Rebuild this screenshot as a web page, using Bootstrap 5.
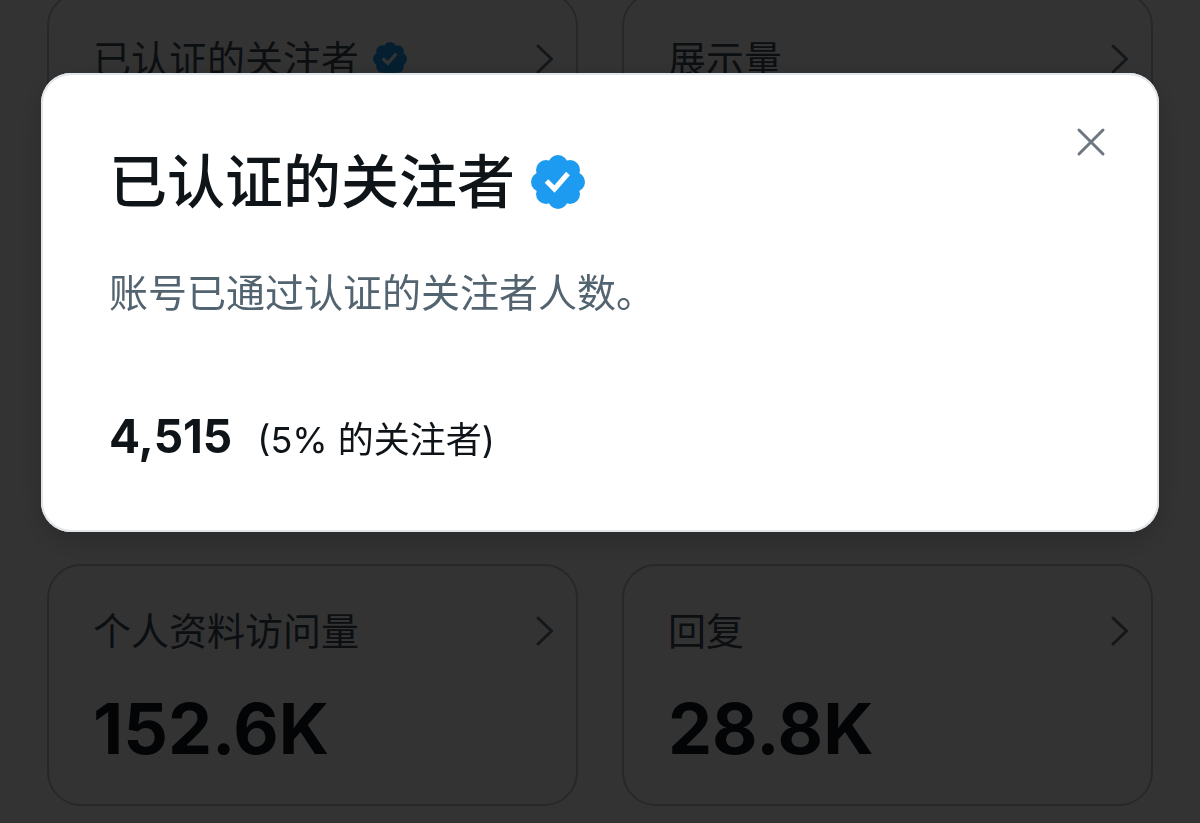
<!DOCTYPE html>
<html lang="zh-CN">
<head>
<meta charset="utf-8">
<meta name="viewport" content="width=device-width, initial-scale=1">
<title>已认证的关注者</title>
<link href="https://cdn.jsdelivr.net/npm/bootstrap@5.3.0/dist/css/bootstrap.min.css" rel="stylesheet">
<style>
  body { font-family: Inter, "Noto Sans CJK SC", sans-serif; color: #0f1419; overflow: hidden; }
  /* the metrics page is scrolled so the first row starts just above the window */
  .metrics { padding: 0 47px; margin-top: -8px; overflow: hidden; }
  .metrics-grid { --bs-gutter-x: 44px; --bs-gutter-y: 44px; }
  .metric { height: 242px; padding: 45px 22px 0 44px; border: 2px solid #bac4ca; border-radius: 34px; }
  .metric-title { font-size: 38px; line-height: 40px; color: #3f4b55; }
  .metric-value { font-size: 70px; line-height: 84px; margin-top: 36px; color: #0f1419; }
  .mini-badge { width: 34px; height: 34px; margin-left: 14px; }
  .chevron { width: 18px; height: 30px; }
  .shade { background: rgba(0, 0, 0, .8); }
  .sheet { max-width: none; margin: 73px 41px; }
  .sheet-box { border: 0; border-radius: 30px; padding: 69px 68px 60px; box-shadow: inset 0 0 0 2px #e1e6ea, 0 8px 30px rgba(0, 0, 0, .2); }
  .sheet-title { font-size: 58px; line-height: 80px; font-weight: 500; }
  .sheet-badge { width: 54px; height: 54px; margin-left: 16px; }
  .sheet-note { font-size: 39px; line-height: 56px; color: #536471; margin-top: 43px; }
  .sheet-count { font-size: 46px; line-height: 64px; }
  .sheet-share { font-size: 36px; line-height: 64px; }
  .sheet-figures { margin-top: 83px; gap: 25px; }
  .sheet-close { position: absolute; top: 53px; right: 52px; width: 32px; height: 32px; }
</style>
</head>
<body>
<svg class="d-none" aria-hidden="true">
  <symbol id="verified" viewBox="0 0 54 54">
    <g fill="#1d9bf0"><circle cx="27" cy="27" r="21"/><circle cx="27" cy="10" r="10"/><circle cx="39" cy="15" r="10"/><circle cx="44" cy="27" r="10"/><circle cx="39" cy="39" r="10"/><circle cx="27" cy="44" r="10"/><circle cx="15" cy="39" r="10"/><circle cx="10" cy="27" r="10"/><circle cx="15" cy="15" r="10"/></g>
    <path d="M15.500 26l8 8 13.500-15.500" fill="none" stroke="#fff" stroke-width="5"/>
  </symbol>
  <symbol id="chevron" viewBox="0 0 18 30"><path d="M2 2l13.500 13L2 28" fill="none" stroke="#64737f" stroke-width="3" stroke-linecap="round"/></symbol>
</svg>

<main class="metrics">
  <div class="row row-cols-2 metrics-grid mt-0">
    <div class="col mt-0"><section class="metric">
      <div class="d-flex align-items-center"><span class="metric-title">已认证的关注者</span><svg class="mini-badge"><use href="#verified"/></svg><svg class="chevron ms-auto"><use href="#chevron"/></svg></div>
    </section></div>
    <div class="col mt-0"><section class="metric">
      <div class="d-flex align-items-center"><span class="metric-title">展示量</span><svg class="chevron ms-auto"><use href="#chevron"/></svg></div>
    </section></div>
    <div class="col"><section class="metric"></section></div>
    <div class="col"><section class="metric"></section></div>
    <div class="col"><section class="metric">
      <div class="d-flex align-items-center"><span class="metric-title">个人资料访问量</span><svg class="chevron ms-auto"><use href="#chevron"/></svg></div>
      <div class="metric-value fw-bold">152.6K</div>
    </section></div>
    <div class="col"><section class="metric">
      <div class="d-flex align-items-center"><span class="metric-title">回复</span><svg class="chevron ms-auto"><use href="#chevron"/></svg></div>
      <div class="metric-value fw-bold">28.8K</div>
    </section></div>
  </div>
</main>

<div class="modal d-block shade" role="dialog" aria-modal="true" aria-labelledby="sheet-title">
  <div class="modal-dialog sheet">
    <div class="modal-content sheet-box">
      <button type="button" class="sheet-close btn p-0 border-0 d-flex" aria-label="关闭">
        <svg width="32" height="32" viewBox="0 0 32 32"><path d="M4 4l24 24M28 4L4 28" stroke="#6e7780" stroke-width="3" stroke-linecap="round"/></svg>
      </button>
      <div class="d-flex align-items-center">
        <h1 class="sheet-title mb-0" id="sheet-title">已认证的关注者</h1>
        <svg class="sheet-badge"><use href="#verified"/></svg>
      </div>
      <p class="sheet-note mb-0">账号已通过认证的关注者人数。</p>
      <div class="sheet-figures d-flex align-items-baseline">
        <strong class="sheet-count fw-bold">4,515</strong>
        <span class="sheet-share">(5% 的关注者)</span>
      </div>
    </div>
  </div>
</div>
<script src="https://cdn.jsdelivr.net/npm/bootstrap@5.3.0/dist/js/bootstrap.bundle.min.js"></script>
</body>
</html>
